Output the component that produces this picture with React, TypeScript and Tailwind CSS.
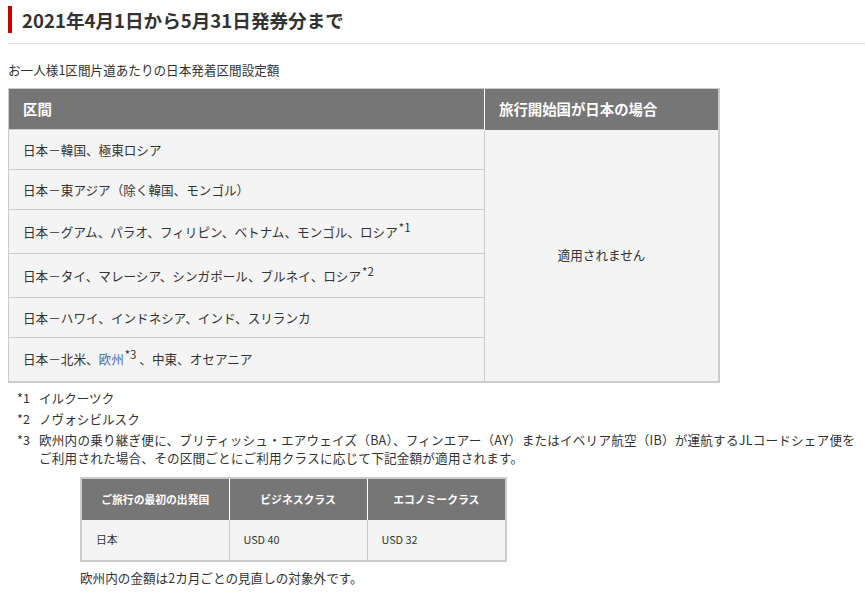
import React from "react";

const sup = "text-[11.5px] relative top-[-5px] ml-[1px]";

const rows: { h: string; content: React.ReactNode }[] = [
  { h: "h-[40px]", content: <>日本－韓国、極東ロシア</> },
  { h: "h-[40px]", content: <>日本－東アジア（除く韓国、モンゴル）</> },
  {
    h: "h-[44px]",
    content: (
      <>
        日本－グアム、パラオ、フィリピン、ベトナム、モンゴル、ロシア
        <sup className={sup}>*1</sup>
      </>
    ),
  },
  {
    h: "h-[44px]",
    content: (
      <>
        日本－タイ、マレーシア、シンガポール、ブルネイ、ロシア
        <sup className={sup}>*2</sup>
      </>
    ),
  },
  { h: "h-[40px]", content: <>日本－ハワイ、インドネシア、インド、スリランカ</> },
  {
    h: "h-[44px]",
    content: (
      <>
        日本－北米、<span className="text-[#4a6fa8]">欧州</span>
        <sup className={sup}>*3</sup> 、中東、オセアニア
      </>
    ),
  },
];

export default function App() {
  return (
    <div className="w-[865px] h-[599px] overflow-hidden bg-white text-[#333] font-['Noto_Sans_CJK_JP','Noto_Sans',sans-serif]">
      <div className="pl-2 pt-[6px]">
        <h1 className="border-l-4 border-[#cc0000] pl-[10px] text-[18.6px] font-bold leading-[27px] text-[#333]">
          2021年4月1日から5月31日発券分まで
        </h1>
        <div className="mt-[10px] border-b border-[#e0e0e0]" />
        <p className="mt-[16px] text-[12.6px] leading-[20px]">お一人様1区間片道あたりの日本発着区間設定額</p>

        <table className="mt-[8px] w-[712px] border-collapse border-t border-l border-r-2 border-b-2 border-[#cccccc] text-[12.6px]">
          <thead>
            <tr className="h-[41px] bg-[#767676] text-white">
              <th className="w-[476px] border-r border-white pl-[14px] text-left text-[14.4px] font-bold">区間</th>
              <th className="pl-[14px] text-left text-[14.4px] font-bold">旅行開始国が日本の場合</th>
            </tr>
          </thead>
          <tbody>
            {rows.map((r, i) => (
              <tr key={i} className={`${r.h} bg-[#f4f4f4]`}>
                <td className="border-t border-[#cccccc] pl-[14px] leading-[20px]">{r.content}</td>
                {i === 0 && (
                  <td rowSpan={6} className="border-l border-[#cccccc] text-center align-middle">
                    適用されません
                  </td>
                )}
              </tr>
            ))}
          </tbody>
        </table>

        <ul className="mt-[6px] text-[12.6px] leading-[18px]">
          <li className="flex">
            <span className="w-[22px] shrink-0 pl-[9px]">*1</span>
            <span className="pl-[9px]">イルクーツク</span>
          </li>
          <li className="mt-[3px] flex">
            <span className="w-[22px] shrink-0 pl-[9px]">*2</span>
            <span className="pl-[9px]">ノヴォシビルスク</span>
          </li>
          <li className="mt-[3px] flex">
            <span className="w-[22px] shrink-0 pl-[9px]">*3</span>
            <span className="pl-[9px] tracking-[0.2px]">
              欧州内の乗り継ぎ便に、ブリティッシュ・エアウェイズ（BA）、フィンエアー（AY）またはイベリア航空（IB）が運航するJLコードシェア便を
              <br />
              ご利用された場合、その区間ごとにご利用クラスに応じて下記金額が適用されます。
            </span>
          </li>
        </ul>

        <table className="ml-[72px] mt-[10px] w-[427px] border-collapse border-2 border-[#cccccc] text-[10.8px]">
          <thead>
            <tr className="h-[42px] bg-[#767676] text-white">
              <th className="w-[148px] border-r border-white text-center font-bold">ご旅行の最初の出発国</th>
              <th className="w-[138px] border-r border-white text-center font-bold">ビジネスクラス</th>
              <th className="text-center font-bold">エコノミークラス</th>
            </tr>
          </thead>
          <tbody>
            <tr className="h-[41px] bg-[#f4f4f4]">
              <td className="border-r border-[#cccccc] pl-[14px]">日本</td>
              <td className="border-r border-[#cccccc] pl-[14px]">USD 40</td>
              <td className="pl-[14px]">USD 32</td>
            </tr>
          </tbody>
        </table>
        <p className="ml-[72px] mt-[6px] text-[12.6px] leading-[20px]">欧州内の金額は2カ月ごとの見直しの対象外です。</p>
      </div>
    </div>
  );
}
